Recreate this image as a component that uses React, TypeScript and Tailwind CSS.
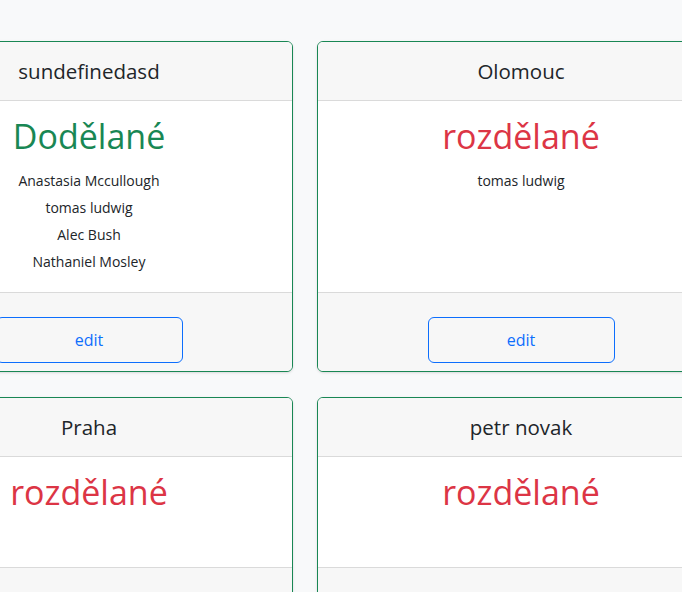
const cards = [
  { title: 'sundefinedasd', done: true, names: ['Anastasia Mccullough', 'tomas ludwig', 'Alec Bush', 'Nathaniel Mosley'] },
  { title: 'Olomouc', done: false, names: ['tomas ludwig'] },
  { title: 'Praha', done: false, names: [] },
  { title: 'petr novak', done: false, names: [] },
]

function Card({ title, done, names }: { title: string; done: boolean; names: string[] }) {
  return (
    <div className="flex flex-col bg-white border border-[#198754] rounded-md shadow-sm overflow-hidden">
      <div className="h-[59px] shrink-0 flex items-center justify-center bg-[#f7f7f7] border-b border-[#dadada] text-[20.5px] text-[#212529]">
        {title}
      </div>
      <div className="flex-1 min-h-[110px] pt-[10px] pb-[17px] text-center">
        <div className={`leading-[50px] text-[34px] ${done ? 'text-[#198754]' : 'text-[#dc3545]'}`}>
          {done ? 'Dodělané' : 'rozdělané'}
        </div>
        {names.length > 0 && (
          <div className="mt-[6px]">
            {names.map((n, i) => (
              <div key={i} className="leading-[27px] text-[14px] text-[#212529]">{n}</div>
            ))}
          </div>
        )}
      </div>
      <div className="shrink-0 bg-[#f7f7f7] border-t border-[#dadada] px-4 pt-6 pb-2">
        <button className="block mx-auto w-1/2 h-[46px] rounded-md border border-[#0d6efd] text-[#0d6efd] text-[16px]">
          edit
        </button>
      </div>
    </div>
  )
}

export default function App() {
  return (
    <div className="w-[682px] h-[592px] overflow-hidden bg-[#f8f9fa] font-['Open_Sans',sans-serif]">
      <div className="grid grid-cols-[408px_408px] gap-x-6 gap-y-[25px] ml-[-115px] pt-[41px]">
        {cards.map((c, i) => (
          <Card key={i} {...c} />
        ))}
      </div>
    </div>
  )
}
